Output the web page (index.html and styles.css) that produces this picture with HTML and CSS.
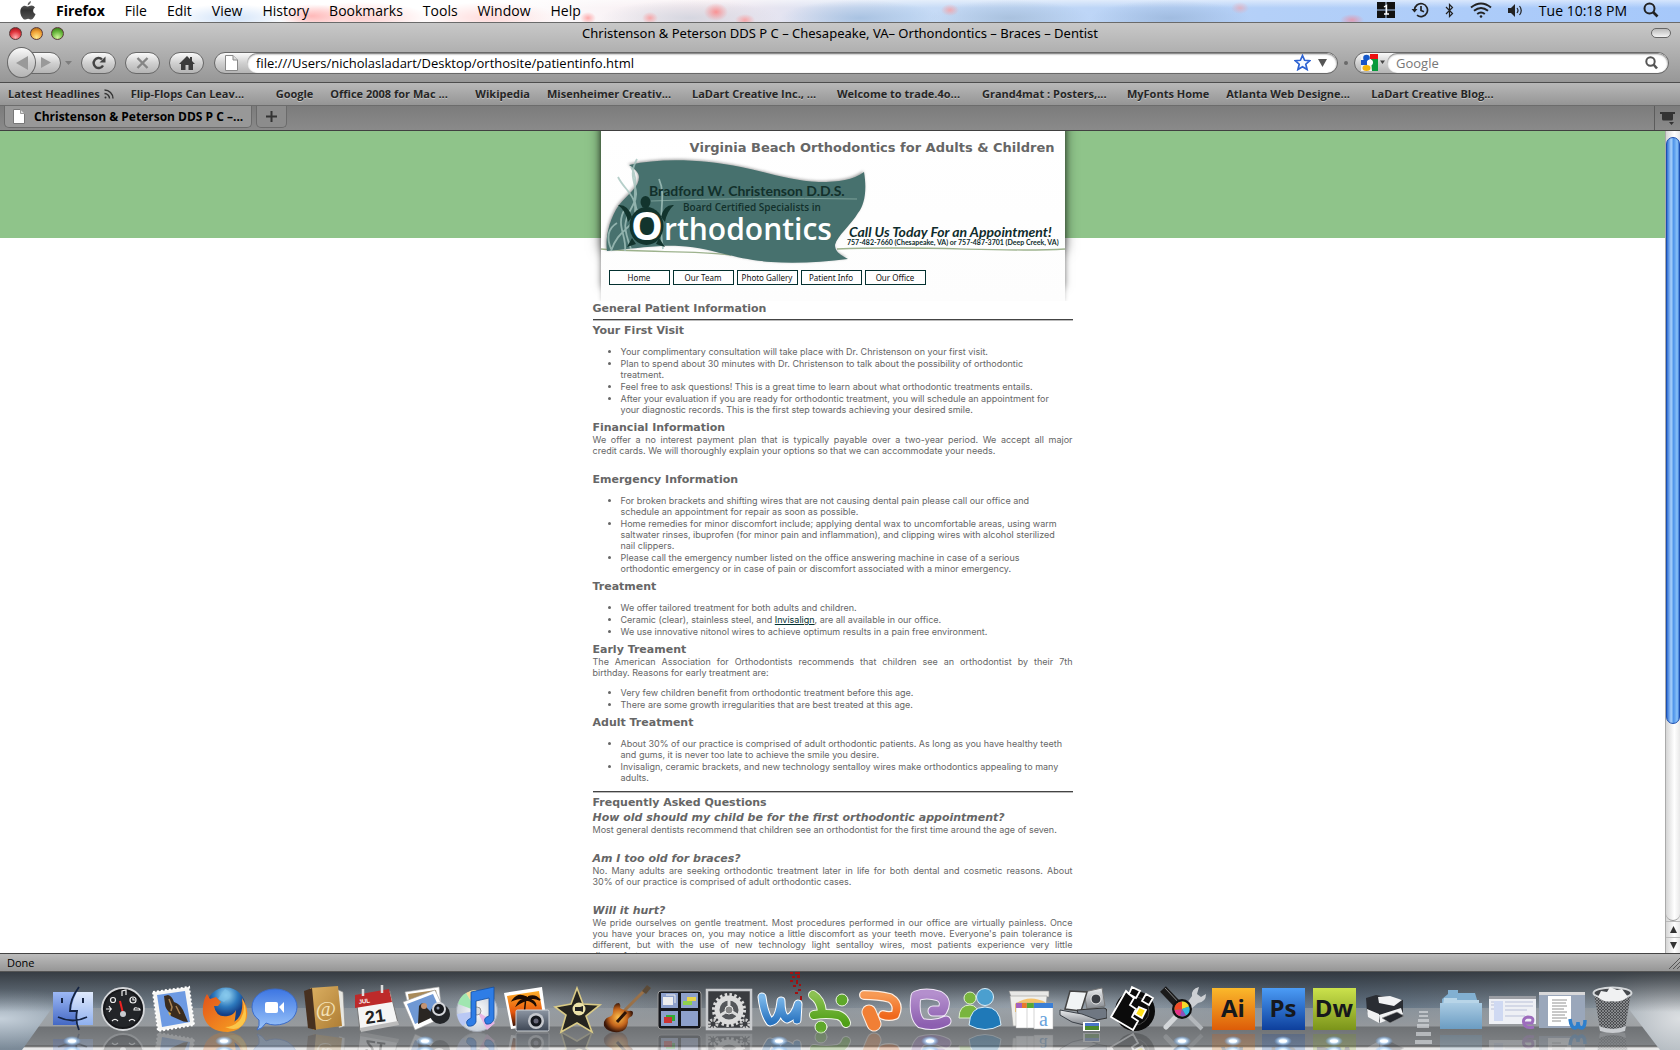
FILE: index.html
```html
<!DOCTYPE html>
<html lang="en">
<head>
<meta charset="utf-8">
<title>Christenson &amp; Peterson DDS P C</title>
<link rel="stylesheet" href="styles.css">
</head>
<body>
<header class="menubar">
  <nav class="menus" aria-label="Menu bar">
    <button class="menu apple" aria-label="Apple menu"><svg width="16" height="19" viewBox="0 0 16 19"><defs><linearGradient id="ap" x1="0" y1="0" x2="0" y2="1"><stop offset="0" stop-color="#777"/><stop offset=".5" stop-color="#333"/><stop offset="1" stop-color="#555"/></linearGradient></defs><path fill="url(#ap)" d="M11 0C11 2 9.500 4 7.700 4.200 7.500 2.300 9.200.4 11 0ZM8 5.500C8.800 5.500 9.800 4.500 11.500 4.500 13 4.500 14.200 5.300 15 6.400 12.300 8 12.700 11.800 15.500 13 14.800 15.300 13 18.500 11.300 18.500 10 18.500 9.600 17.700 8.100 17.700 6.600 17.700 6.100 18.500 4.900 18.500 3 18.500.3 14.600.3 10.700.3 7 2.500 4.700 4.800 4.700 6.200 4.700 7.200 5.500 8 5.500Z"/></svg></button>
    <button class="menu app">Firefox</button>
    <button class="menu">File</button>
    <button class="menu">Edit</button>
    <button class="menu">View</button>
    <button class="menu">History</button>
    <button class="menu">Bookmarks</button>
    <button class="menu">Tools</button>
    <button class="menu">Window</button>
    <button class="menu">Help</button>
  </nav>
  <div class="extras">
    <svg width="18" height="16" viewBox="0 0 18 16"><path fill="#111" d="M0 0h8.500v7.500H0zM9.500 0H18v7.500H9.500zM0 8.500h8.500V16H0zM9.500 8.500H18V16H9.500z"/><path d="M7 5l2.500-1.500V12M7 12h5" stroke="#fff" stroke-width="1.400" fill="none"/></svg>
    <svg width="18" height="16" viewBox="0 0 18 16" fill="none" stroke="#222" stroke-width="1.700"><path d="M3.500 8A6.500 6.500 0 1 1 6 13.200M10 4v4.500l3 1.200"/><path d="M.5 7h6L3.500 10.500Z" fill="#222" stroke="none"/></svg>
    <svg width="9" height="15" viewBox="0 0 9 15" fill="none" stroke="#222" stroke-width="1.200"><path d="M1 4l6.500 6.500L4.500 13.500V1.500l3 3L1 11"/></svg>
    <svg width="22" height="16" viewBox="0 0 22 16" fill="none" stroke="#222" stroke-width="2"><path d="M1 5.500Q11-2.500 21 5.500M4 8.800Q11 3.200 18 8.800M7.200 12Q11 9 14.800 12"/><circle cx="11" cy="14.500" r="1.300" fill="#222" stroke="none"/></svg>
    <svg width="15" height="13" viewBox="0 0 15 13"><path fill="#222" d="M0 4h3l4-4v13L3 9H0z"/><path d="M9 4q2 2.500 0 5M11.500 2q3.500 4.500 0 9" stroke="#222" stroke-width="1.200" fill="none"/></svg>
    <span class="clock">Tue 10:18 PM</span>
    <svg width="16" height="16" viewBox="0 0 16 16" fill="none" stroke="#222"><circle cx="6.500" cy="6.500" r="5" stroke-width="2"/><path d="M10 10l4.500 4.500" stroke-width="2.600"/></svg>
  </div>
</header>

<main class="window">
  <div class="titlebar">
    <div class="lights"><span class="light red"></span><span class="light amber"></span><span class="light green"></span></div>
    <div class="title">Christenson &amp; Peterson DDS P C – Chesapeake, VA– Orthondontics – Braces – Dentist</div>
    <button class="pill" aria-label="Toggle toolbar"></button>
  </div>

  <form class="toolbar">
    <div class="history">
      <button type="button" class="back" aria-label="Back"><svg width="12" height="14" viewBox="0 0 12 14"><path d="M12 0v14L0 7z" fill="#999"/></svg></button>
      <button type="button" class="forward" aria-label="Forward"><svg width="10" height="11" viewBox="0 0 10 11"><path d="M0 0v11l10-5.500z" fill="#999"/></svg></button>
      <svg class="caret" width="7" height="4" viewBox="0 0 7 4"><path d="M0 0h7L3.500 4z" fill="#7d7d7d"/></svg>
    </div>
    <button type="button" class="tool" aria-label="Reload"><svg width="14" height="14" viewBox="0 0 14 14"><path d="M11 9.500A5 5 0 1 1 10 3.300" fill="none" stroke="#444" stroke-width="2.400"/><path d="M13.500.5v6h-6z" fill="#444"/></svg></button>
    <button type="button" class="tool" aria-label="Stop"><svg width="13" height="12" viewBox="0 0 13 12"><path d="M1.500 1l10 10M11.500 1l-10 10" stroke="#858585" stroke-width="2.400"/></svg></button>
    <button type="button" class="tool" aria-label="Home"><svg width="16" height="14" viewBox="0 0 16 14"><path d="M8 0l3 3V1h2v4l3 3h-2v6H9.500V9h-3v5H2V8H0z" fill="#3c3c3c"/></svg></button>
    <div class="field url">
      <span class="tag"><svg width="13" height="16" viewBox="0 0 13 16"><path d="M.5.5h7.500l4.500 4.500v10.500H.5z" fill="#fff" stroke="#888"/><path d="M8 .5v4.500h4.500" fill="#ddd" stroke="#888"/></svg></span>
      <span class="box"><input type="text" aria-label="Address" value="file:///Users/nicholasladart/Desktop/orthosite/patientinfo.html">
      <svg width="17" height="17" viewBox="0 0 17 17"><path d="M8.500 1.500l2.100 4.800 5.200.4-4 3.500 1.300 5.300-4.600-2.800-4.600 2.800 1.300-5.300-4-3.500 5.200-.4z" fill="#f4f9ff" stroke="#2d62d2" stroke-width="1.700"/></svg>
      <svg width="9" height="8" viewBox="0 0 9 8"><path d="M0 0h9L4.500 8z" fill="#555"/></svg></span>
    </div>
    <span class="grip"></span>
    <div class="field search">
      <span class="tag"><svg width="24" height="17" viewBox="0 0 24 17"><path d="M0 0h17v17H0z" fill="#f4f4f4"/><path d="M9 0h8v5H9z" fill="#e11"/><path d="M10 5h7v12h-6z" fill="#0a9a3c"/><path d="M0 6h6v5H0z" fill="#1c53c8"/><circle cx="5.500" cy="4" r="3.300" fill="#1457c9"/><circle cx="9" cy="8.500" r="3" fill="#fff"/><ellipse cx="5.500" cy="14" rx="4" ry="3" fill="#f6b40c"/><path d="M19 6.500h5L21.500 10z" fill="#444"/></svg></span>
      <span class="box"><input type="text" aria-label="Search" placeholder="Google">
      <svg width="13" height="14" viewBox="0 0 13 14" fill="none" stroke="#555"><circle cx="5.500" cy="5.500" r="4.200" stroke-width="2"/><path d="M8.500 8.500l3.500 4" stroke-width="2.600"/></svg></span>
    </div>
  </form>

  <nav class="bookmarks" aria-label="Bookmarks">
    <a href="#" class="feed">Latest Headlines <svg width="10" height="10" viewBox="0 0 10 10" fill="none" stroke="#333" stroke-width="1.400"><circle cx="1.500" cy="8.500" r="1" fill="#333" stroke="none"/><path d="M.5 4.500a5 5 0 0 1 5 5M.5 1a8.500 8.500 0 0 1 8.500 8.500"/></svg></a>
    <a href="#" class="long">Flip-Flops Can Leav...</a>
    <a href="#">Google</a>
    <a href="#" class="long">Office 2008 for Mac ...</a>
    <a href="#">Wikipedia</a>
    <a href="#" class="long">Misenheimer Creativ...</a>
    <a href="#" class="long">LaDart Creative Inc., ...</a>
    <a href="#" class="long">Welcome to trade.4o...</a>
    <a href="#" class="long">Grand4mat : Posters,...</a>
    <a href="#">MyFonts Home</a>
    <a href="#" class="long">Atlanta Web Designe...</a>
    <a href="#" class="long">LaDart Creative Blog...</a>
  </nav>

  <div class="tabs">
    <button class="tab"><svg width="12" height="15" viewBox="0 0 12 15"><path d="M.5.500h7l4 4v10H.5z" fill="#fff" stroke="#777"/><path d="M7.500.5v4h4" fill="#ddd" stroke="#999"/></svg><span>Christenson &amp; Peterson DDS P C –...</span></button>
    <button class="newtab" aria-label="New tab"><svg width="11" height="11" viewBox="0 0 11 11"><path d="M5.500 0v11M0 5.500h11" stroke="#333" stroke-width="2"/></svg></button>
    <button class="alltabs" aria-label="List all tabs"><svg width="15" height="13" viewBox="0 0 15 13"><path d="M0 0h15v2H0zM2 2h11v5q0 1.500-1.500 1.500h-8Q2 8.500 2 7zM9 10h5l-2.500 3z" fill="#333"/></svg></button>
  </div>

  <div class="viewport">
    <div class="page">
      <div class="sheet">
        <header class="masthead">
          <h1>Virginia Beach Orthodontics for Adults &amp; Children</h1>
          <svg class="logo" viewBox="0 26 464 110" role="img" aria-label="Bradford W. Christenson D.D.S., Orthodontics">
            <defs><filter id="soft" x="-10%" y="-10%" width="120%" height="120%"><feGaussianBlur stdDeviation="1.600"/></filter>
            <path id="flag" d="M28 34C62 26 105 29 140 36C165 41 190 50 218 51C238 51 252 49 263 41C266 58 264 74 257 82C250 94 236 105 234 114C234 121 240 124 247 128C222 131 195 133 170 131C130 128 108 116 78 115C58 114 40 117 6 120C4 108 8 88 18 74C28 62 38 56 38 46C38 42 34 38 28 34Z"/></defs>
            <path d="M0 118C50 122 90 119 130 124M236 118C330 114 400 122 464 118" fill="none" stroke="#9db28d" stroke-width="1.300"/>
            <use href="#flag" fill="#555" opacity=".55" filter="url(#soft)" y="-1" x="-1"/>
            <use href="#flag" fill="#47716e"/>
            <path d="M50 70Q150 66 256 68" stroke="#7da19a" fill="none"/>
            <g fill="none" stroke="#a4c3bd" stroke-width="1.800" opacity=".8"><path d="M36 28C24 50 42 56 32 74S22 96 30 118M17 46C24 60 36 64 34 82S18 96 10 120M58 48C66 66 56 84 62 118M30 36C40 50 28 66 38 84M16 92C6 98 6 108 10 118M24 78C14 94 26 104 24 120"/></g>
            <g fill="#12342d"><ellipse cx="45.500" cy="95" rx="17" ry="19"/><ellipse cx="44.500" cy="71" rx="5" ry="6"/><path d="M17 74q10-1 14 12l-4 5q-2-11-10-17zM73 74q-10-1-13 12l4 5q2-11 9-17zM31 107l-5 9 9-3zM58 107l6 9-9-3z"/></g>
            <text class="doctor" x="48" y="65">Bradford W. Christenson D.D.S.</text>
            <text class="board" x="82" y="80">Board Certified Specialists in</text>
            <text class="ortho" x="30" y="109"><tspan class="cap">O</tspan><tspan x="63">rthodontics</tspan></text>
            <text class="call" x="248" y="106">Call Us Today For an Appointment!</text>
            <text class="phones" x="246" y="114">757-482-7660 (Chesapeake, VA) or 757-487-3701 (Deep Creek, VA)</text>
          </svg>
          <nav class="sitenav" aria-label="Site">
            <a href="#">Home</a><a href="#">Our Team</a><a href="#">Photo Gallery</a><a href="#">Patient Info</a><a href="#">Our Office</a>
          </nav>
        </header>

        <article class="copy">
          <h2>General Patient Information</h2>
          <hr>
          <h3>Your First Visit</h3>
          <ul>
            <li>Your complimentary consultation will take place with Dr. Christenson on your first visit.</li>
            <li>Plan to spend about 30 minutes with Dr. Christenson to talk about the possibility of orthodontic<br>treatment.</li>
            <li>Feel free to ask questions! This is a great time to learn about what orthodontic treatments entails.</li>
            <li>After your evaluation if you are ready for orthodontic treatment, you will schedule an appointment for<br>your diagnostic records. This is the first step towards achieving your desired smile.</li>
          </ul>
          <h3>Financial Information</h3>
          <p><span class="full">We offer a no interest payment plan that is typically payable over a two-year period. We accept all major</span> credit cards. We will thoroughly explain your options so that we can accommodate your needs.</p>
          <h3>Emergency Information</h3>
          <ul>
            <li>For broken brackets and shifting wires that are not causing dental pain please call our office and<br>schedule an appointment for repair as soon as possible.</li>
            <li>Home remedies for minor discomfort include; applying dental wax to uncomfortable areas, using warm<br>saltwater rinses, ibuprofen (for minor pain and inflammation), and clipping wires with alcohol sterilized<br>nail clippers.</li>
            <li>Please call the emergency number listed on the office answering machine in case of a serious<br>orthodontic emergency or in case of pain or discomfort associated with a minor emergency.</li>
          </ul>
          <h3>Treatment</h3>
          <ul>
            <li>We offer tailored treatment for both adults and children.</li>
            <li>Ceramic (clear), stainless steel, and <a href="#">Invisalign</a>, are all available in our office.</li>
            <li>We use innovative nitonol wires to achieve optimum results in a pain free environment.</li>
          </ul>
          <h3>Early Treament</h3>
          <p><span class="full">The American Association for Orthodontists recommends that children see an orthodontist by their 7th</span> birthday. Reasons for early treatment are:</p>
          <ul>
            <li>Very few children benefit from orthodontic treatment before this age.</li>
            <li>There are some growth irregularities that are best treated at this age.</li>
          </ul>
          <h3>Adult Treatment</h3>
          <ul>
            <li>About 30% of our practice is comprised of adult orthodontic patients. As long as you have healthy teeth<br>and gums, it is never too late to achieve the smile you desire.</li>
            <li>Invisalign, ceramic brackets, and new technology sentalloy wires make orthodontics appealing to many<br>adults.</li>
          </ul>
          <hr class="rule">
          <h2>Frequently Asked Questions</h2>
          <h3 class="ask first">How old should my child be for the first orthodontic appointment?</h3>
          <p>Most general dentists recommend that children see an orthodontist for the first time around the age of seven.</p>
          <h3 class="ask">Am I too old for braces?</h3>
          <p><span class="full">No. Many adults are seeking orthodontic treatment later in life for both dental and cosmetic reasons. About</span> 30% of our practice is comprised of adult orthodontic cases.</p>
          <h3 class="ask">Will it hurt?</h3>
          <p><span class="full">We pride ourselves on gentle treatment. Most procedures performed in our office are virtually painless. Once</span> <span class="full">you have your braces on, you may notice a little discomfort as your teeth move. Everyone's pain tolerance is</span> <span class="full">different, but with the use of new technology light sentalloy wires, most patients experience very little</span> discomfort.</p>
        </article>
      </div>
    </div>
    <div class="scrollbar">
      <div class="track"><div class="thumb"></div></div>
      <button class="arrow" aria-label="Scroll up"><svg width="7" height="7" viewBox="0 0 7 7"><path d="M3.500 0L7 7H0z" fill="#333"/></svg></button>
      <button class="arrow" aria-label="Scroll down"><svg width="7" height="7" viewBox="0 0 7 7"><path d="M3.500 7L7 0H0z" fill="#333"/></svg></button>
    </div>
  </div>
  <div class="status"><span>Done</span><svg width="12" height="12" viewBox="0 0 12 12"><path d="M1 12L12 1M5 12l7-7M9 12l3-3" stroke="#555"/></svg></div>
</main>

<footer class="dock">
  <svg class="defs" width="0" height="0" aria-hidden="true"><defs>
    <radialGradient id="lamp"><stop offset="0" stop-color="#fff"/><stop offset=".4" stop-color="#d6ecff"/><stop offset="1" stop-color="#6fb0ff" stop-opacity="0"/></radialGradient>
    <g id="on"><ellipse cx="24" cy="69" rx="9" ry="5" fill="url(#lamp)"/><ellipse cx="24" cy="69" rx="4" ry="1.500" fill="#fff"/><ellipse cx="24" cy="78" rx="9" ry="4" fill="url(#lamp)"/></g>
    <linearGradient id="gBlue" x1="0" y1="0" x2="0" y2="1"><stop offset="0" stop-color="#9db9f5"/><stop offset="1" stop-color="#4468c4"/></linearGradient>
    <linearGradient id="gPale" x1="0" y1="0" x2="0" y2="1"><stop offset="0" stop-color="#dfe9fc"/><stop offset="1" stop-color="#8fb0ee"/></linearGradient>
    <linearGradient id="gChat" x1="0" y1="0" x2="0" y2="1"><stop offset="0" stop-color="#3d76e2"/><stop offset="1" stop-color="#9cc6fb"/></linearGradient>
    <linearGradient id="gFox" x1="0" y1="0" x2="1" y2="1"><stop offset="0" stop-color="#e2531a"/><stop offset="1" stop-color="#f9a723"/></linearGradient>
    <linearGradient id="gSun" x1="0" y1="0" x2="0" y2="1"><stop offset="0" stop-color="#ffb02a"/><stop offset=".6" stop-color="#e8560c"/><stop offset="1" stop-color="#3a1204"/></linearGradient>
    <linearGradient id="gSteel" x1="0" y1="0" x2="0" y2="1"><stop offset="0" stop-color="#eceef0"/><stop offset="1" stop-color="#83878d"/></linearGradient>
    <linearGradient id="gCam" x1="0" y1="0" x2="0" y2="1"><stop offset="0" stop-color="#8d96a3"/><stop offset="1" stop-color="#3d4654"/></linearGradient>
    <linearGradient id="gWord" x1="0" y1="0" x2="0" y2="1"><stop offset="0" stop-color="#7cb8ea"/><stop offset="1" stop-color="#2a74c0"/></linearGradient>
    <linearGradient id="gXl" x1="0" y1="0" x2="0" y2="1"><stop offset="0" stop-color="#8cc152"/><stop offset="1" stop-color="#4fa016"/></linearGradient>
    <linearGradient id="gPpt" x1="0" y1="0" x2="0" y2="1"><stop offset="0" stop-color="#f79a55"/><stop offset="1" stop-color="#f0681c"/></linearGradient>
    <linearGradient id="gEnt" x1="0" y1="0" x2="0" y2="1"><stop offset="0" stop-color="#b48fcd"/><stop offset="1" stop-color="#8d5fb0"/></linearGradient>
    <linearGradient id="gAi" x1="0" y1="0" x2="0" y2="1"><stop offset="0" stop-color="#fbb92b"/><stop offset="1" stop-color="#dd5c08"/></linearGradient>
    <linearGradient id="gPs" x1="0" y1="0" x2="0" y2="1"><stop offset="0" stop-color="#4b9cf6"/><stop offset="1" stop-color="#0d3f9c"/></linearGradient>
    <linearGradient id="gDw" x1="0" y1="0" x2="0" y2="1"><stop offset="0" stop-color="#cbe24c"/><stop offset="1" stop-color="#7b941a"/></linearGradient>
    <linearGradient id="gFold" x1="0" y1="0" x2="0" y2="1"><stop offset="0" stop-color="#a9cbe3"/><stop offset="1" stop-color="#6b9cc2"/></linearGradient>
    <linearGradient id="gBook" x1="0" y1="0" x2="1" y2="1"><stop offset="0" stop-color="#dcb062"/><stop offset="1" stop-color="#ad7c33"/></linearGradient>
    <radialGradient id="gGlobe" cx=".5" cy=".2"><stop offset="0" stop-color="#a5e0f8"/><stop offset=".6" stop-color="#2d79bd"/><stop offset="1" stop-color="#153f85"/></radialGradient>
    <radialGradient id="gGtr"><stop offset="0" stop-color="#ffc24d"/><stop offset=".6" stop-color="#c3641c"/><stop offset="1" stop-color="#3a1608"/></radialGradient>
    <radialGradient id="gDisc"><stop offset="0" stop-color="#fff"/><stop offset="1" stop-color="#c9d0da"/></radialGradient>
    <pattern id="mesh" width="3" height="3" patternUnits="userSpaceOnUse"><rect width="3" height="3" fill="#4b4d50"/><path d="M0 0l3 3M3 0L0 3" stroke="#a6a8ab" stroke-width=".6"/></pattern>
  </defs></svg>

  <svg class="icon" viewBox="0 0 50 78"><g id="i1"><path d="M5 20h40v33H5z" fill="url(#gPale)"/><path d="M5 20h24q-5 10-6 19h5v14H5z" fill="url(#gBlue)"/><path d="M31 15q-9 12-9 24h7q-2 10 2 19M10 45q15 7 29 0" fill="none" stroke="#142342" stroke-width="1.800"/><path d="M14 26v5M35 26v5" stroke="#142342" stroke-width="2"/></g><use href="#i1" class="mirror"/><use href="#on"/></svg>
  <svg class="icon" viewBox="0 0 50 78"><g id="i2"><circle cx="24" cy="37" r="21" fill="#16171a" stroke="#d5d7da" stroke-width="1.800"/><circle cx="24" cy="37" r="18" fill="#222428"/><path d="M21 29l3 12" stroke="#e22" stroke-width="2"/><circle cx="24" cy="42" r="3" fill="#c9cbd0"/><g fill="none" stroke="#eee" stroke-width="1.200"><circle cx="14" cy="28" r="2.500"/><circle cx="34" cy="28" r="3"/><path d="M34 26v2h2M23 24v-5l4-1v5M7 37h6M10 34l2 3-2 3M35 38q0-3 3-2 3 0 3 2zM13 49q3-3 6 0M30 49q3-3 6 0"/></g></g><use href="#i2" class="mirror"/></svg>
  <svg class="icon" viewBox="0 0 50 78"><g id="i3"><path d="M4 20l36-5 5 38-36 6z" fill="#f6f6f4" stroke="#fff" stroke-width="2" stroke-dasharray="2 2"/><path d="M8 23l28-4 5 31-28 5z" fill="#6d9ae2"/><path d="M19 23q4 1 6 7 6 2 9 8l5 12q-5 0-8-2l-9-4-2-4q-4-4-4-8l-1-8z" fill="#3a2c1e"/><path d="M20 27l3 8-1 4M27 34l4 8" stroke="#a98353" stroke-width="1.500" fill="none"/><path d="M19 40l3 1-1 3z" fill="#e2b23c"/></g><use href="#i3" class="mirror"/></svg>
  <svg class="icon" viewBox="0 0 50 78"><g id="i4"><circle cx="26" cy="35" r="19.500" fill="url(#gGlobe)"/><path d="M25 17q7 3 4 8l-5 5-6-3z" fill="#7cc0e8" opacity=".7"/><path d="M7 22l3 5 6-2 5 5-3 4h-4q2 12 14 10 6-1 8-6-1 12-2 12 10-6 8-24 8 12 4 22-5 11-18 12Q7 60 3 42 2 30 7 22z" fill="url(#gFox)"/><path d="M42 27q5 12-3 22-6 6-14 6 14 6 20-6 3-12-3-22z" fill="#fbc64a"/></g><use href="#i4" class="mirror"/><use href="#on"/></svg>
  <svg class="icon" viewBox="0 0 50 78"><g id="i5"><path d="M25 17c13 0 22 8 22 18S38 53 25 53q-5 0-9-2-4 6-9 7 3-4 2-10-7-5-7-13c0-10 10-18 23-18z" fill="url(#gChat)" stroke="#3c6cc8"/><rect x="15" y="30" width="13" height="11" rx="2" fill="#fff"/><path d="M29 35l5-5v11z" fill="#fff"/></g><use href="#i5" class="mirror"/></svg>
  <svg class="icon" viewBox="0 0 50 78"><g id="i6"><path d="M36 17l7 3 2 34-6 2z" fill="#e7e7e2" stroke="#888" stroke-width=".6"/><path d="M10 16l28-2 4 40-29 4z" fill="url(#gBook)"/><path d="M4 19l8-3 4 42-8-2z" fill="#47301f"/><text x="26" y="44" class="at">@</text></g><use href="#i6" class="mirror"/></svg>
  <svg class="icon" viewBox="0 0 50 78"><g id="i7"><path d="M5 25l34-6 8 32-38 8z" fill="#f5f5f5" stroke="#777"/><path d="M4 23l34-6 3 13-37 6z" fill="#bd2a2a"/><path d="M9 56l38-7 1 4-38 7z" fill="#bbb"/><path d="M12 17v7M31 13v8" stroke="#ddd" stroke-width="2.500"/><text x="8" y="32" class="jul" transform="rotate(-8 8 32)">JUL</text><text x="15" y="52" class="day" transform="rotate(-8 15 52)">21</text></g><use href="#i7" class="mirror"/></svg>
  <svg class="icon" viewBox="0 0 50 78"><g id="i8"><path d="M4 20l34-5 3 27-31 3z" fill="#fff" stroke="#aaa" stroke-width=".6"/><path d="M7 22l28-4 2 12-28 4z" fill="#a98a58"/><path d="M2 30l32-12 12 26-32 14z" fill="#fff" stroke="#999" stroke-width=".6"/><path d="M6 32l26-10 8 18-26 12z" fill="#6f98d4"/><path d="M18 34q5-7 8 2l8 8-17 8z" fill="#2a2622"/><circle cx="23" cy="34" r="3" fill="#c39372"/><circle cx="39" cy="42" r="10" fill="#232528"/><circle cx="38" cy="37" r="7" fill="#d4d6da"/><circle cx="38" cy="37" r="5" fill="#15171b"/><circle cx="37" cy="36" r="1.500" fill="#8a93a8"/></g><use href="#i8" class="mirror"/><use href="#on"/></svg>
  <svg class="icon" viewBox="0 0 50 78"><g id="i9"><circle cx="25" cy="39" r="20.500" fill="url(#gDisc)" stroke="#a5abb5"/><path d="M25 39L6 32q2-8 8-11z" fill="#a0e6b0"/><path d="M25 39L14 21q5-3 10-3z" fill="#f3dc9a"/><path d="M25 39l18 12-8 7z" fill="#e8b6e4"/><path d="M25 39L5 42q1 8 6 12z" fill="#b9c8f4"/><circle cx="25" cy="39" r="4" fill="#ddd" stroke="#999"/><path d="M19 20l23-5v32q-2 6-8 5-4-6 3-8V26l-13 3v21q-2 5-8 4-4-5 3-8z" fill="#2e7de6" stroke="#124d9f" stroke-width=".8"/></g><use href="#i9" class="mirror"/></svg>
  <svg class="icon" viewBox="0 0 50 78"><g id="i10"><path d="M2 21l38-6 5 37-36 5z" fill="#fff"/><path d="M5 24l32-5 5 30-31 5z" fill="url(#gSun)"/><path d="M24 24l-2 20M24 25q-8-4-13 3 7-3 13-1-6 0-9 6 6-4 10-5 6 1 9 6-1-6-8-7 6-2 12 1-5-6-12-3" stroke="#1c0c04" stroke-width="1.500" fill="#1c0c04"/><rect x="14" y="38" width="33" height="21" rx="1.500" fill="url(#gCam)" stroke="#cfd3d8"/><circle cx="34" cy="49" r="8" fill="#c5c8ce"/><circle cx="34" cy="49" r="5.500" fill="#14171d"/><circle cx="34" cy="49" r="2.500" fill="#667"/></g><use href="#i10" class="mirror"/></svg>
  <svg class="icon" viewBox="0 0 50 78"><g id="i11"><path d="M24 16l6 16 17 1-14 11 6 16-15-9-16 9 5-17L2 35l16-3z" fill="#25241f" stroke="#d9ca86" stroke-width="1.600"/><circle cx="26" cy="37" r="6.500" fill="#ece2a8"/><path d="M22 35h5l3-1v6l-3-1h-5z" fill="#222"/></g><use href="#i11" class="mirror"/></svg>
  <svg class="icon" viewBox="0 0 50 78"><g id="i12"><path d="M20 40L42 18" stroke="#9a7148" stroke-width="3"/><path d="M39 19l5-6 4 3-5 6z" fill="#5b4a37"/><path d="M10 40q0-9 6-9 2 2 1 5 4 3 9 3 6-1 3 5-5 2-4 6-1 9-9 10-11 1-15-6-1-7 5-9 4-1 4-5z" fill="url(#gGtr)"/><path d="M14 50l9-10" stroke="#2b1407" stroke-width="3"/></g><use href="#i12" class="mirror"/></svg>
  <svg class="icon" viewBox="0 0 50 78"><g id="i13"><rect x="4" y="19" width="43" height="38" rx="3" fill="#15171c" stroke="#999"/><path d="M7 21h17v15H7zM27 21h17v15H27zM7 39h17v15H7zM27 39h17v15H27z" fill="#8da0cb"/><path d="M9 25h10v8H9z" fill="#eee"/><path d="M12 23h9v8" fill="none" stroke="#eee"/><path d="M29 29h9v4h-9z" fill="#8ed04e"/><path d="M33 25h9v4h-9z" fill="#e8d44c"/><path d="M12 43h9v6h-9z" fill="#3a3"/><path d="M10 45h8v6h-8z" fill="#c33"/></g><use href="#i13" class="mirror"/></svg>
  <svg class="icon" viewBox="0 0 50 78"><g id="i14"><rect x="3" y="18" width="44" height="39" fill="#3a3c40" stroke="#c9cbce" stroke-width="2.500"/><circle cx="25" cy="38" r="12" fill="#55575b" stroke="#dcdcdc" stroke-width="5"/><circle cx="25" cy="38" r="15.500" fill="none" stroke="#dcdcdc" stroke-width="3" stroke-dasharray="2.500 2.370"/><path d="M25 38V26M25 38l-10 6M25 38l10 6" stroke="#dcdcdc" stroke-width="3"/><circle cx="25" cy="38" r="4" fill="#888" stroke="#eee"/><circle cx="9" cy="52" r="4" fill="none" stroke="#ccc" stroke-width="3" stroke-dasharray="2 1.140"/><circle cx="41" cy="52" r="4" fill="none" stroke="#ccc" stroke-width="3" stroke-dasharray="2 1.140"/></g><use href="#i14" class="mirror"/></svg>
  <svg class="icon" viewBox="0 0 50 78"><g id="i15" fill="none" stroke-linecap="round" stroke-linejoin="round"><path d="M7 25Q9 42 15 50 24 49 26 29 26 44 32 47 40 44 43 32L42 48" stroke="#fff" stroke-width="9"/><path d="M7 25Q9 42 15 50 24 49 26 29 26 44 32 47 40 44 43 32L42 48" stroke="url(#gWord)" stroke-width="7"/></g><use href="#i15" class="mirror"/><g fill="#a01010"><path d="M35 0h3v2h-3zM40 0h5v2h-5zM37 4h3v2h-3zM42 3h3v3h-3zM35 8h3v2h-3zM41 8h2v4h-2zM44 12h2v2h-2zM38 13h3v2h-3zM43 17h3v2h-3zM40 20h3v2h-3zM45 24h2v4h-2z"/></g><use href="#on"/></svg>
  <svg class="icon" viewBox="0 0 50 78"><g id="i16" stroke-linecap="round" stroke-linejoin="round"><g fill="none"><path d="M8 23q8 5 9 17M9 43q12-2 24 0 6 2 8 8" stroke="#eef6e6" stroke-width="10"/><path d="M8 23q8 5 9 17M9 43q12-2 24 0 6 2 8 8" stroke="url(#gXl)" stroke-width="8"/></g><circle cx="37" cy="28" r="6" fill="#5fa82a" stroke="#eef6e6"/><circle cx="16" cy="55" r="6" fill="#5fa82a" stroke="#eef6e6"/></g><use href="#i16" class="mirror"/></svg>
  <svg class="icon" viewBox="0 0 50 78"><g id="i17" fill="none" stroke-linecap="round" stroke-linejoin="round"><path d="M9 23q14 0 26 3 10 6 5 17-6 2-12 0" stroke="#fdeee2" stroke-width="10"/><path d="M9 23q14 0 26 3 10 6 5 17-6 2-12 0" stroke="url(#gPpt)" stroke-width="7.500"/><path d="M14 40l5 12" stroke="#fdeee2" stroke-width="15"/><path d="M14 40l5 12" stroke="#f17f35" stroke-width="13"/></g><use href="#i17" class="mirror"/></svg>
  <svg class="icon" viewBox="0 0 50 78"><g id="i18" fill="none" stroke-linecap="round" stroke-linejoin="round"><path d="M27 39h9q6-10-3-15-13-4-23 0-3 20 5 27 13 4 25-2" stroke="#f1e8f7" stroke-width="11"/><path d="M27 39h9q6-10-3-15-13-4-23 0-3 20 5 27 13 4 25-2" stroke="url(#gEnt)" stroke-width="9"/></g><use href="#i18" class="mirror"/><use href="#on"/></svg>
  <svg class="icon" viewBox="0 0 50 78"><g id="i19"><circle cx="14" cy="26" r="6" fill="#79b53e" stroke="#dff0cf"/><path d="M3 46q0-13 11-13 8 0 10 13z" fill="#79b53e" stroke="#dff0cf"/><circle cx="29" cy="25" r="8.500" fill="#4b9fcf" stroke="#d9edf8"/><path d="M13 53q1-18 16-18t16 18q-16 9-32 0z" fill="#1f79b8" stroke="#d9edf8"/></g><use href="#i19" class="mirror"/></svg>
  <svg class="icon" viewBox="0 0 50 78"><g id="i20"><path d="M2 19h40v6H4z" fill="#e8e8e6" stroke="#888" stroke-width=".6"/><path d="M3 24h37l-3 30H6z" fill="#efefec" stroke="#999" stroke-width=".6"/><path d="M8 32q14-10 30-2v10H8z" fill="#f5c26a"/><path d="M9 31h12v25H9z" fill="#fff" stroke="#aaa" stroke-width=".5"/><path d="M9 31h6v5H9z" fill="#a561bd"/><path d="M15 31h6v5h-6z" fill="#e87a2a"/><path d="M20 31h8v25h-8z" fill="#fff" stroke="#aaa" stroke-width=".5"/><path d="M20 31h8v5h-8z" fill="#56a835"/><path d="M27 31h19v26H27z" fill="#fff" stroke="#aaa" stroke-width=".5"/><path d="M27 31h19v5H27z" fill="#3b7fd6"/><text x="32" y="54" class="seriefa">a</text></g><use href="#i20" class="mirror"/></svg>
  <svg class="icon" viewBox="0 0 50 78"><g id="i21"><path d="M27 20l18-4 3 18-18 3z" fill="url(#gSteel)" stroke="#777"/><circle cx="39" cy="27" r="5" fill="#3b3e44" stroke="#eee"/><path d="M8 37l5-18 17 1-6 19z" fill="#f1f4f5" stroke="#444" stroke-width="1.500"/><path d="M20 38l27-2q3 0 3 4v6l-26 5z" fill="#6f7782" stroke="#333"/><path d="M3 38l22 4 16 6-14 5-12-3-12-7z" fill="url(#gSteel)" stroke="#3b4047"/><path d="M26 50h17v9H26z" fill="#fff"/><path d="M28 51h14v7H28z" fill="#4b8a2c"/><path d="M28 51h14v3H28z" fill="#4a75c8"/></g><use href="#i21" class="mirror"/></svg>
  <svg class="icon" viewBox="0 0 50 78"><g id="i22"><circle cx="27" cy="39" r="20" fill="#0b0b0b"/><circle cx="27" cy="39" r="14" fill="none" stroke="#444"/><path d="M18 19l-15 26 22 13 5-9-6-4 4-8-6-4 4-7-5-4zM24 15l8 4-4 7-7-4zM38 22l7 4-4 7-7-4z" fill="#0b0b0b" stroke="#fff" stroke-width="1.800"/><path d="M31 35l7 3-4 8-7-4z" fill="#ffe11a" stroke="#fff" stroke-width="1.800"/></g><use href="#i22" class="mirror"/></svg>
  <svg class="icon" viewBox="0 0 50 78"><g id="i23"><path d="M29 33L8 55" stroke="#d3d6d9" stroke-width="5" stroke-linecap="round"/><path d="M30 43l14 14" stroke="#b3b7bb" stroke-width="4"/><path d="M29 31l5-7q-1-7 7-9l-2 7 4 3 5-3q0 8-8 9l-7 6z" fill="#cdd0d4"/><path d="M5 17l18 19" stroke="#1b1b1b" stroke-width="8"/><path d="M7 16l16 17" stroke="#888"/><circle cx="24" cy="37" r="10" fill="#111"/><g transform="translate(-1 0)"><circle cx="25" cy="37" r="7.500" fill="#4cb748"/><path d="M25 37v-7.500a7.500 7.500 0 0 1 7 5z" fill="#f5d92a"/><path d="M25 37l7-2.500a7.500 7.500 0 0 1-3 9z" fill="#33b5e0"/><path d="M25 37l-2 7a7.500 7.500 0 0 0 6-.5z" fill="#8a4fc0"/><path d="M25 37l-7.500 1a7.500 7.500 0 0 0 5.500 6z" fill="#e83288"/><path d="M25 37l-7.500 1a7.500 7.500 0 0 1 7.500-8.500z" fill="#f04a26"/></g></g><use href="#i23" class="mirror"/><use href="#on"/></svg>
  <svg class="icon" viewBox="0 0 50 78"><g id="i24"><path d="M3 16h43v42H3z" fill="url(#gAi)"/><text x="24" y="45" class="adobe">Ai</text></g><use href="#i24" class="mirror"/><use href="#on"/></svg>
  <svg class="icon" viewBox="0 0 50 78"><g id="i25"><path d="M3 16h43v42H3z" fill="url(#gPs)"/><text x="24" y="45" class="adobe">Ps</text></g><use href="#i25" class="mirror"/><use href="#on"/></svg>
  <svg class="icon" viewBox="0 0 50 78"><g id="i26"><path d="M3 16h43v42H3z" fill="url(#gDw)"/><text x="24" y="45" class="adobe">Dw</text></g><use href="#i26" class="mirror"/><use href="#on"/></svg>
  <svg class="icon" viewBox="0 0 50 78"><g id="i27"><path d="M6 26l10-3 27 5v13l-23 9L7 40z" fill="#2a2d33"/><path d="M18 25l12-1 12 4-8 6-15-3z" fill="#f2f3f5"/><path d="M7 37l12 5v9L8 45zM19 43l22-7 2 6-23 9z" fill="#f0f1f2"/><path d="M22 46l15-6 7 4-14 7z" fill="#24272d" stroke="#999" stroke-width=".6"/></g><use href="#i27" class="mirror"/><use href="#on"/></svg>
  <svg class="divider" viewBox="0 0 26 78"><path d="M9 39h9v2H9zM9 43h9v2H9zM8 47h11v3H8zM7 52h12v4H7zM6 60h15v4H6zM5 68h17v4H5z" fill="#dfe3e6" opacity=".6"/></svg>
  <svg class="icon" viewBox="0 0 50 78"><g id="i28"><path d="M12 22v-4h10v3h17l3 10v24H6V27z" fill="#82b0d2"/><path d="M8 26h13v2h22v5H7z" fill="#b8d5e8"/><path d="M4 31h42v26H4z" fill="url(#gFold)"/></g><use href="#i28" class="mirror"/></svg>
  <svg class="icon" viewBox="0 0 50 78"><g id="i29"><path d="M2 24h47v28H2z" fill="#eef0f5"/><path d="M2 24h47v3H2z" fill="#9a9da3"/><path d="M4 30h8M4 33h8M4 37h8M18 30h28M18 34h28M18 38h22M18 44h20" stroke="#b9c0d8"/><path d="M7 29h9v20H7z" fill="#cfd9f2"/><path d="M38 51h7q3-6-4-6-6 1-4 7 2 5 10 3" fill="none" stroke="#9d6cbd" stroke-width="3"/></g><use href="#i29" class="mirror"/></svg>
  <svg class="icon" viewBox="0 0 50 78"><g id="i30"><path d="M2 20h46v36H2z" fill="#9aa7bb"/><path d="M2 20h46v3H2z" fill="#d8d8da"/><path d="M11 24h23v30H11z" fill="#fff"/><path d="M15 28h15M15 31h14M15 34h15M15 37h12M15 40h15M15 43h13M15 46h15M15 49h9" stroke="#777" stroke-width=".8"/><path d="M33 47q1 9 5 9 3-1 3-6 0 6 4 6 3-1 3-8" fill="none" stroke="#2e7fcc" stroke-width="3.500"/></g><use href="#i30" class="mirror"/></svg>
  <svg class="icon" viewBox="0 0 50 78"><g id="i31"><path d="M6 21h37l-6 36q-12 6-25 0z" fill="url(#mesh)"/><path d="M11 54q14 6 27 0l-1 5q-12 4-25 0z" fill="#c9ccd0"/><ellipse cx="24.500" cy="21" rx="19" ry="5.500" fill="#46494d" stroke="#d5d8db" stroke-width="2"/><path d="M10 25l3-6 6 1 3-5 7 3 5-1 3 4 3 4q-8 6-16 4-8 2-14-4z" fill="#f0f1f2"/></g><use href="#i31" class="mirror"/></svg>
</footer>
</body>
</html>
```
FILE: styles.css
```css
* { box-sizing: border-box; }

body {
  margin: 0;
  height: 100vh;
  display: flex;
  flex-direction: column;
  overflow: hidden;
  background: #6d7a86;
  font-family: "Open Sans", "Noto Sans", sans-serif;
  font-size: 13px;
  color: #000;
}

button {
  border: 0;
  padding: 0;
  background: none;
  font: inherit;
  color: inherit;
}

svg { display: block; flex: none; }

/* Menu bar */
.menubar {
  flex: none;
  height: 22px;
  display: flex;
  justify-content: space-between;
  align-items: center;
  padding: 0 20px 2px;
  font-size: 14px;
  background:
    radial-gradient(34px 12px at 312px 16px, #ff9d9daa, transparent),
    radial-gradient(12px 9px at 716px 12px, #ff8080cc, transparent),
    radial-gradient(10px 6px at 745px 20px, #ff9090bb, transparent),
    radial-gradient(8px 6px at 588px 18px, #ff9090bb, transparent),
    radial-gradient(8px 6px at 650px 18px, #ff9090bb, transparent),
    radial-gradient(9px 6px at 950px 10px, #ff9a9abb, transparent),
    radial-gradient(9px 6px at 1240px 8px, #ff9a9a88, transparent),
    radial-gradient(12px 6px at 1352px 20px, #f28a9abb, transparent),
    radial-gradient(60px 14px at 230px 18px, #b9d4f5aa, transparent),
    radial-gradient(70px 16px at 360px 18px, #ffb9b9aa, transparent),
    radial-gradient(70px 16px at 490px 18px, #ffc9c9aa, transparent),
    radial-gradient(90px 18px at 690px 18px, #c5ccd8aa, transparent),
    radial-gradient(80px 18px at 860px 18px, #94b4d8aa, transparent),
    radial-gradient(80px 18px at 1010px 18px, #9db6d2aa, transparent),
    radial-gradient(80px 18px at 1170px 18px, #94b0d4aa, transparent),
    linear-gradient(#ffffff88, transparent 8px),
    linear-gradient(90deg, #fff 0, #fff 30%, #f5e9ee 42%, #c8dcf6 54%, #b4d0f8 75%, #a6c8fa 100%);
}

.menus { display: flex; align-items: center; gap: 20px; }
.app { font-weight: 700; }
.extras { display: flex; align-items: center; gap: 16px; padding-right: 1px; }

/* Browser window */
.window {
  flex: 1;
  min-height: 0;
  display: flex;
  flex-direction: column;
  border-top: 1px solid #6a6a6a;
  background: linear-gradient(#c8c8c8, #969696 60px);
}

.titlebar {
  flex: none;
  height: 20px;
  display: flex;
  align-items: center;
  justify-content: space-between;
  padding: 0 9px;
}

.lights { display: flex; gap: 8px; width: 120px; }

.light {
  width: 13px;
  height: 13px;
  border-radius: 50%;
  border: 1px solid #5a3a3a;
}
.red { background: radial-gradient(circle at 50% 85%, #ffb0b0, #e0333b 55%, #8c0f16); }
.amber { background: radial-gradient(circle at 50% 85%, #ffe98a, #f0a035 55%, #9a5a10); }
.green { background: radial-gradient(circle at 50% 85%, #d0f59a, #65b53a 55%, #2c6a12); }

.title { font-family: "Noto Sans", sans-serif; white-space: nowrap; }

.pill {
  width: 20px;
  height: 10px;
  margin-left: 100px;
  border: 1px solid #666;
  border-radius: 5px;
  background: linear-gradient(#bbb, #f4f4f4);
}

.toolbar {
  flex: none;
  height: 40px;
  margin: 0;
  display: flex;
  align-items: center;
  gap: 9px;
  padding: 0 11px 0 7px;
  border-bottom: 1px solid #4c4c4c;
}

.history { display: flex; align-items: center; width: 65px; }

.back,
.forward,
.tool,
.field {
  border: 1px solid #686868;
  background: linear-gradient(#fafafa, #d0d0d0 50%, #b4b4b4);
}

.back {
  width: 31px;
  height: 31px;
  border-radius: 50%;
  display: grid;
  place-items: center;
  z-index: 1;
}

.forward {
  width: 32px;
  height: 22px;
  margin-left: -6px;
  padding-left: 10px;
  border-radius: 0 11px 11px 0;
}

.caret { margin-left: 4px; }

.tool {
  width: 35px;
  height: 22px;
  border-radius: 11px;
  display: grid;
  place-items: center;
}

.field {
  height: 22px;
  display: flex;
  border-radius: 11px;
  overflow: hidden;
}
.url { flex: 1; margin-left: 1px; }
.search { width: 315px; }

.tag { width: 32px; display: grid; place-items: center; }
.search .tag { padding-left: 3px; }

.box {
  flex: 1;
  display: flex;
  align-items: center;
  gap: 7px;
  padding: 0 10px 0 9px;
  border-radius: 11px;
  background: #fff;
  box-shadow: inset 0 1px 2px #666;
}

.box input {
  flex: 1;
  min-width: 0;
  height: 20px;
  padding: 0;
  border: 0;
  outline: 0;
  background: none;
  font: inherit;
}
.box input::placeholder { color: #777; opacity: 1; }

.grip { width: 4px; height: 4px; margin: 0 -3px; border-radius: 50%; background: #6a6a6a; }

.bookmarks {
  flex: none;
  height: 23px;
  display: flex;
  align-items: center;
  gap: 17px;
  padding: 0 8px 1px;
  background: linear-gradient(#b8b8b8, #959595);
  border-bottom: 1px solid #6c6c6c;
  font-size: 11px;
  font-weight: 700;
  white-space: nowrap;
}
.bookmarks a { color: #262626; text-decoration: none; text-shadow: 0 1px 0 #c4c4c4; }
.bookmarks .long { width: 128px; }
.feed { display: flex; align-items: center; gap: 4px; }

.tabs {
  flex: none;
  height: 25px;
  display: flex;
  align-items: flex-start;
  gap: 4px;
  padding-left: 4px;
  background: linear-gradient(#7c7c7c, #8a8a8a);
  border-bottom: 1px solid #404040;
}

.tab,
.newtab {
  height: 22px;
  border: 1px solid #6b6b6b;
  border-top: 0;
  border-radius: 0 0 5px 5px;
  background: #989898;
}

.tab {
  width: 248px;
  display: flex;
  align-items: center;
  gap: 9px;
  padding-left: 8px;
  font-size: 12px;
  font-weight: 700;
  white-space: nowrap;
}

.newtab { width: 31px; display: grid; place-items: center; background: #8c8c8c; }

.alltabs {
  width: 26px;
  height: 24px;
  margin-left: auto;
  border-left: 1px solid #5c5c5c;
  display: grid;
  place-items: center;
}

/* Web page */
.viewport { flex: 1; min-height: 0; display: flex; background: #fff; }

.page {
  flex: 1;
  min-width: 0;
  overflow: hidden;
  background: linear-gradient(#8fc48a 107px, #fff 107px);
  font-family: "DejaVu Sans", Verdana, sans-serif;
  color: #666;
}

.sheet { width: 480px; margin: 0 auto; }

.masthead {
  height: 170px;
  margin: 0 8px;
  display: flex;
  flex-direction: column;
  background: linear-gradient(#fff, #fdfdfd);
  box-shadow: 0 -12px 8px -1px #0008, 0 -50px 12px #0008, 0 0 4px #0003;
  clip-path: inset(0 -16px 0 -16px);
}

.masthead h1 {
  margin: 0;
  height: 26px;
  padding-right: 10px;
  font-size: 13px;
  line-height: 33px;
  text-align: right;
  white-space: nowrap;
}

.logo { width: 100%; height: 110px; overflow: visible; }

.doctor { font: 700 14px Lato, sans-serif; fill: #12302b; }
.board { font: 600 10px "Open Sans", sans-serif; fill: #12302b; }
.ortho { font: 600 30px "Open Sans", sans-serif; fill: #fff; }
.cap { font-size: 40px; font-weight: 700; }
.call { font: italic 700 14px Lato, sans-serif; fill: #0f2c2c; }
.phones { font: 700 7px Lato, sans-serif; fill: #0f2c2c; }

.sitenav { display: flex; gap: 3px; padding: 3px 8px 0; }

.sitenav a {
  width: 61px;
  height: 15px;
  border: 1px solid #03302f;
  background: #fff;
  color: #111;
  font-size: 8px;
  font-family: "Noto Sans", sans-serif;
  line-height: 13px;
  text-align: center;
  text-decoration: none;
  white-space: nowrap;
}

.copy {
  padding-top: 2px;
  font-family: Inter, "DejaVu Sans", sans-serif;
  font-size: 9px;
  line-height: 11px;
}

.copy h2,
.copy h3 {
  margin: 0;
  font-family: "DejaVu Sans", Verdana, sans-serif;
  font-size: 11px;
  line-height: 12px;
}

.copy hr {
  height: 2px;
  margin: 4px 0;
  border: 0;
  background: linear-gradient(#444 1px, #bbb 1px);
}
.copy .rule { margin-top: 8px; }

.copy p { margin: 0 0 18px; text-align: justify; }
.copy p:has(+ ul) { margin: 0; }
.copy .full { display: block; text-align-last: justify; }

.copy ul { margin: 9px 0 7px; padding-left: 28px; white-space: nowrap; }
.copy li + li { margin-top: 1px; }
.copy li a { color: #03302f; }
.copy .ask { font-style: italic; }
.copy .first { margin-top: 3px; }

.scrollbar {
  width: 15px;
  flex: none;
  display: flex;
  flex-direction: column;
  border-left: 1px solid #aaa;
  background: linear-gradient(90deg, #d5d5d5, #fff 60%, #e8e8e8);
}

.track { flex: 1; padding-top: 6px; border-bottom: 1px solid #999; border-radius: 0 0 8px 8px; }

.thumb {
  height: 75%;
  border-radius: 7px;
  border: 1px solid #1d4fae;
  background: linear-gradient(90deg, #2f6fd6, #a9d2fb 35%, #4f94ea 55%, #8cc4fa 85%, #3a78d4);
}

.arrow { height: 16px; display: grid; place-items: center; border-top: 1px solid #bbb; }

.status {
  flex: none;
  height: 19px;
  display: flex;
  align-items: center;
  justify-content: space-between;
  padding-left: 7px;
  border-top: 1px solid #444;
  border-bottom: 1px solid #555;
  background: linear-gradient(#bcbcbc, #969696);
  font-size: 11px;
}

/* Dock */
.dock {
  flex: none;
  height: 78px;
  display: grid;
  grid-template-columns: repeat(27, 1fr) 26px repeat(4, 1fr);
  justify-items: center;
  padding: 0 42px 0 48px;
  position: relative;
  isolation: isolate;
  background:
    linear-gradient(#25292ecc, #25292e00 40px),
    radial-gradient(120px 30px at 0 60%, #c5d0da, transparent),
    radial-gradient(90px 60px at 100% 60%, #dcdfe2, transparent),
    radial-gradient(200px 30px at 30% 30%, #a5aeb8, transparent),
    radial-gradient(300px 30px at 62% 40%, #a9b4be, transparent),
    linear-gradient(90deg, #7b8a98, #7d858c 40%, #66788a 80%, #9aa4ac);
}

.dock::before {
  content: "";
  position: absolute;
  z-index: -1;
  inset: 36px 20px 0 22px;
  clip-path: polygon(30px 0, calc(100% - 32px) 0, 100% 100%, 0 100%);
  background: linear-gradient(#9a9fa399, #9b9d9fdd 18px, #6f7275 19px, #808386 37px, #555 38px, #e9e9e9 40px);
}

.defs { position: absolute; }
.icon { width: 50px; height: 78px; }
.divider { width: 26px; height: 78px; }
.mirror { transform: translateY(120px) scaleY(-1); opacity: .22; }

.at { font: 22px "Liberation Serif", serif; fill: #f3e2b8; text-anchor: middle; }
.jul { font: 700 6px "Liberation Sans", sans-serif; fill: #fff; }
.day { font: 700 18px "Liberation Sans", sans-serif; fill: #222; }
.adobe { font: 700 24px "Open Sans", sans-serif; fill: #16181c; text-anchor: middle; }
.seriefa { font: 20px "Liberation Serif", serif; fill: #6aa3dc; }
```
